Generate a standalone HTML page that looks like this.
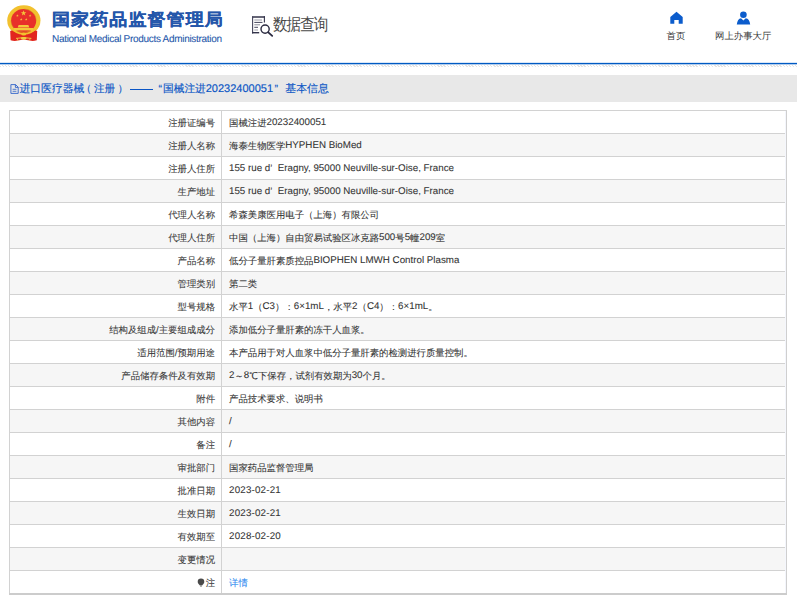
<!DOCTYPE html>
<html><head><meta charset="utf-8">
<style>
@font-face{font-family:"LT";src:local("Liberation Sans");size-adjust:104%;unicode-range:U+0000-024F,U+00D7}
@font-face{font-family:"LB";src:local("Liberation Sans");unicode-range:U+0000-024F}
*{margin:0;padding:0;box-sizing:border-box}
html,body{text-rendering:geometricPrecision;width:797px;height:599px;overflow:hidden;background:#fff;font-family:"Liberation Sans",sans-serif;color:#333}
.abs{position:absolute;white-space:nowrap}
#emblem{left:4px;top:2px;width:40px;height:42px}
#title{left:52px;top:9px;font-size:18px;letter-spacing:1.1px;font-weight:bold;-webkit-text-stroke:0.25px #2456aa;color:#2456aa;line-height:22px;transform:scaleY(0.92);transform-origin:0 10.5px}
#en{left:52px;top:34px;font-size:10px;letter-spacing:-0.3px;color:#2456aa;line-height:12px;-webkit-text-stroke:0.08px #2456aa}
#sq{left:248px;top:10px;width:30px;height:30px}
#sqt{left:273px;top:13.5px;font-size:14.6px;letter-spacing:-1px;color:#4a4a4a;line-height:20px;transform:scaleY(1.15);transform-origin:0 0}
.nav{top:29px;font-size:9.4px;color:#383838;line-height:14px}
#line{left:0;top:63px;width:797px;height:1px;background:#005ac3;box-shadow:0 1px 0 rgba(0,90,195,0.3),0 -1px 0 rgba(0,90,195,0.15)}
#dash{left:0;top:65px;width:797px;height:2px;background:repeating-linear-gradient(45deg,#e4e4e4 0,#e4e4e4 1px,#fff 1px,#fff 2.2px)}
#band{left:0;top:75px;width:797px;height:27px;background:#e8e8e8}
.cr{top:82px;font-family:"LB","Liberation Sans",sans-serif;font-size:10.5px;color:#0a55c5;line-height:14px;-webkit-text-stroke:0.15px #0a55c5}
table{position:absolute;left:9px;top:110px;width:776px;border-collapse:collapse;font-family:"LT","Liberation Sans",sans-serif;font-size:9.4px}
td{border:1px solid #d2d2d2;height:23px;padding:3px 7px 0;white-space:nowrap;color:#333;line-height:12px;-webkit-text-stroke:0.08px #333}
td.l{width:212px;text-align:right;color:#3a3a3a;padding-right:6px}
tr:nth-child(even) td{background:#f6f6f6}
tr.last td{border-bottom:2px solid #cccccc;padding-top:4px}
td:last-child{border-right:none}
#rb{left:786px;top:110px;width:1px;height:485px;background:#cfcfcf}
#tb{left:784px;top:110px;width:3px;height:1px;background:#d2d2d2}
#bb{left:784px;top:593px;width:3px;height:2px;background:#cccccc}
#gap{left:785px;top:111px;width:1px;height:482px;background:#f4f6fc}
.e{position:relative;top:-1px}
a{color:#328cf0;text-decoration:none;-webkit-text-stroke:0.08px #328cf0}
</style></head><body>
<svg id="emblem" class="abs" viewBox="4 2 40 42">
  <ellipse cx="23.85" cy="20.5" rx="16.6" ry="15.3" fill="#f2c12e"/>
  <path d="M10.2 31 Q12 30 14 31.5 L33.5 31.5 Q35.5 30 37.2 31 L36.8 40.3 Q33 41.6 29.5 40.6 L23.7 39.6 L17.9 40.6 Q14.4 41.6 10.6 40.3Z" fill="#e2261e"/>
  <ellipse cx="23.6" cy="20.7" rx="12.6" ry="11.6" fill="#e8302a"/>
  <ellipse cx="23.6" cy="20.5" rx="12.8" ry="11.6" fill="none" stroke="#d09a20" stroke-width="0.5" stroke-dasharray="30 20" stroke-dashoffset="-8"/>
  <path d="M11.28 27.20 A14.4 13.2 0 0 0 36.22 27.20" fill="none" stroke="#f2c12e" stroke-width="1.7"/>
  <g fill="#f4c83a">
    <path d="M13.8 28 H33.3 V30.4 H13.8Z"/>
    <path d="M18.6 25 H28.4 L29.3 27.6 H17.7Z"/>
    <path d="M23.60 10.20 L24.28 12.16 L26.36 12.20 L24.70 13.46 L25.30 15.45 L23.60 14.26 L21.90 15.45 L22.50 13.46 L20.84 12.20 L22.92 12.16Z M17.40 14.30 L17.73 15.25 L18.73 15.27 L17.93 15.87 L18.22 16.83 L17.40 16.26 L16.58 16.83 L16.87 15.87 L16.07 15.27 L17.07 15.25Z M30.10 14.30 L30.43 15.25 L31.43 15.27 L30.63 15.87 L30.92 16.83 L30.10 16.26 L29.28 16.83 L29.57 15.87 L28.77 15.27 L29.77 15.25Z M21.20 18.00 L21.53 18.95 L22.53 18.97 L21.73 19.57 L22.02 20.53 L21.20 19.96 L20.38 20.53 L20.67 19.57 L19.87 18.97 L20.87 18.95Z M26.20 18.00 L26.53 18.95 L27.53 18.97 L26.73 19.57 L27.02 20.53 L26.20 19.96 L25.38 20.53 L25.67 19.57 L24.87 18.97 L25.87 18.95Z"/>
  </g>
  <ellipse cx="23.7" cy="33.9" rx="2.5" ry="1.5" fill="#f2c12e"/>
  <path d="M16 38.4 Q23.7 36.8 31.4 38.4" fill="none" stroke="#f0d040" stroke-width="0.9"/>
  <path d="M17.2 38.2 L17.8 40.6 M30.2 38.2 L29.6 40.6" stroke="#f0d040" stroke-width="0.8"/>
  <ellipse cx="23.7" cy="38.3" rx="2.9" ry="1.4" fill="#f0d040"/>
</svg>
<div id="title" class="abs">国家药品监督管理局</div>
<div id="en" class="abs">National Medical Products Administration</div>
<svg id="sq" class="abs" viewBox="248 10 30 30">
  <path d="M252 17 H265" stroke="#33334a" stroke-width="1.5"/>
  <path d="M252.6 16.5 V33.4" stroke="#44445a" stroke-width="1.1"/>
  <path d="M252 32.7 H259.2" stroke="#33334a" stroke-width="1.4"/>
  <path d="M264.4 16.3 V22.4" stroke="#33334a" stroke-width="1.1"/>
  <g stroke-width="1">
    <path d="M254.3 20 H262" stroke="#9a9aa6"/>
    <path d="M254.3 22.4 H262.5" stroke="#44445a"/>
    <path d="M254.3 24.8 H260" stroke="#8a8a96"/>
    <path d="M254.3 27.3 H258" stroke="#44445a"/>
    <path d="M254.3 30 H258" stroke="#a0a0aa"/>
  </g>
  <circle cx="265.1" cy="29.1" r="4.1" fill="#fff" stroke="#2a2a40" stroke-width="1.4"/>
  <path d="M268.3 32.3 L272.2 35.9" stroke="#2a2a40" stroke-width="1.8" stroke-linecap="round"/>
</svg>
<div id="sqt" class="abs">数据查询</div>
<svg class="abs" style="left:660px;top:5px" width="130" height="25" viewBox="660 5 130 25">
  <path d="M676.5 11.7 L682.7 17 V23.7 H678.7 V20 H674.3 V23.7 H670.3 V17Z" fill="#0b5ccc"/>
  <circle cx="743.4" cy="14.7" r="3.3" fill="#0b5ccc"/>
  <path d="M736.8 24.5 Q737.5 18.8 741 18.3 L743.4 20.5 L745.8 18.3 Q749.5 18.8 750.2 24.5Z" fill="#0b5ccc"/>
</svg>
<div class="abs nav" style="left:666.5px">首页</div>
<div class="abs nav" style="left:715px">网上办事大厅</div>
<div id="line" class="abs"></div>
<div id="dash" class="abs"></div>
<div id="band" class="abs"></div>
<svg class="abs" style="left:9px;top:83px" width="11" height="12" viewBox="0 0 11 12">
  <path d="M1.9 1.6 H6.6 L9.2 4.2 V10.4 H1.9Z M6.4 1.6 V4.4 H9.2" fill="none" stroke="#2f62c8" stroke-width="0.9" stroke-linejoin="round"/>
  <path d="M3.6 6.3 H7.4 M3.6 8.3 H7.4" stroke="#2f62c8" stroke-width="0.8"/>
</svg>
<div class="abs cr" style="left:19.5px;font-size:10.8px">进口医疗器械</div>
<div class="abs cr" style="left:81px;font-size:10.6px">（</div>
<div class="abs cr" style="left:94px;font-size:10.6px">注册</div>
<div class="abs cr" style="left:117.5px;font-size:10.6px">）</div>
<div class="abs" style="left:129.5px;top:89px;width:23px;height:1px;background:#0a55c5"></div>
<div class="abs cr" style="left:158.5px">“</div>
<div class="abs cr" style="left:163px;font-size:10.7px">国械注进<span style="font-size:11px">20232400051</span></div>
<div class="abs cr" style="left:274.5px">”</div>
<div class="abs cr" style="left:285.3px;font-size:10.9px">基本信息</div>
<table>
<tr><td class="l">注册证编号</td><td>国械注进<span class="e">20232400051</span></td></tr>
<tr><td class="l">注册人名称</td><td>海泰生物医学<span class="e">HYPHEN BioMed</span></td></tr>
<tr><td class="l">注册人住所</td><td><span class="e">155 rue d’&nbsp; Eragny, 95000 Neuville-sur-Oise, France</span></td></tr>
<tr><td class="l">生产地址</td><td><span class="e">155 rue d’&nbsp; Eragny, 95000 Neuville-sur-Oise, France</span></td></tr>
<tr><td class="l">代理人名称</td><td>希森美康医用电子（上海）有限公司</td></tr>
<tr><td class="l">代理人住所</td><td>中国（上海）自由贸易试验区冰克路<span class="e">500</span>号<span class="e">5</span>幢<span class="e">209</span>室</td></tr>
<tr><td class="l">产品名称</td><td>低分子量肝素质控品<span class="e">BIOPHEN LMWH Control Plasma</span></td></tr>
<tr><td class="l">管理类别</td><td>第二类</td></tr>
<tr><td class="l">型号规格</td><td>水平<span class="e">1</span>（<span class="e">C3</span>）：<span class="e">6×1mL</span>，水平<span class="e">2</span>（<span class="e">C4</span>）：<span class="e">6×1mL</span>。</td></tr>
<tr><td class="l">结构及组成/主要组成成分</td><td>添加低分子量肝素的冻干人血浆。</td></tr>
<tr><td class="l">适用范围/预期用途</td><td>本产品用于对人血浆中低分子量肝素的检测进行质量控制。</td></tr>
<tr><td class="l">产品储存条件及有效期</td><td><span class="e">2</span>～<span class="e">8</span>℃下保存，试剂有效期为<span class="e">30</span>个月。</td></tr>
<tr><td class="l">附件</td><td>产品技术要求、说明书</td></tr>
<tr><td class="l">其他内容</td><td><span class="e">/</span></td></tr>
<tr><td class="l">备注</td><td><span class="e">/</span></td></tr>
<tr><td class="l">审批部门</td><td>国家药品监督管理局</td></tr>
<tr><td class="l">批准日期</td><td><span class="e" style="letter-spacing:0.2px">2023-02-21</span></td></tr>
<tr><td class="l">生效日期</td><td><span class="e" style="letter-spacing:0.2px">2023-02-21</span></td></tr>
<tr><td class="l">有效期至</td><td><span class="e" style="letter-spacing:0.2px">2028-02-20</span></td></tr>
<tr><td class="l">变更情况</td><td></td></tr>
<tr class="last"><td class="l"><svg width="8" height="9" viewBox="0 0 8 9" style="vertical-align:-1px;margin-right:1px"><path d="M4 0.6 A3.3 3.3 0 0 1 7.3 3.9 C7.3 5.5 5.6 6.2 5.1 7.6 L2.9 7.6 C2.4 6.2 0.7 5.5 0.7 3.9 A3.3 3.3 0 0 1 4 0.6Z" fill="#4a4a4a"/><path d="M3 8.2 H5" stroke="#8a8a8a" stroke-width="0.9"/></svg>注</td><td><a>详情</a></td></tr>
</table>
<div id="gap" class="abs"></div><div id="rb" class="abs"></div><div id="tb" class="abs"></div><div id="bb" class="abs"></div>
</body></html>
